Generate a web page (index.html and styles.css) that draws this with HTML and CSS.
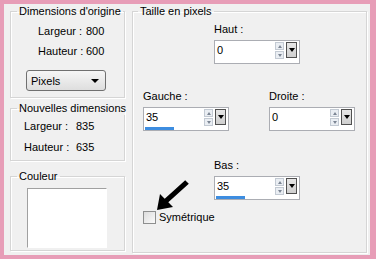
FILE: index.html
```html
<!DOCTYPE html>
<html lang="fr">
<head>
    <meta charset="UTF-8">
    <title>Taille de la bordure</title>
    <link rel="stylesheet" href="styles.css">
</head>
<body>
    <div class="panel">
        <div class="left">
            <fieldset class="group group-orig">
                <legend>Dimensions d'origine</legend>
                <div class="dims dims-orig">
                    <span>Largeur :</span><span>800</span>
                    <span>Hauteur :</span><span>600</span>
                </div>
                <div class="select"><span>Pixels</span><span class="caret"></span></div>
            </fieldset>

            <fieldset class="group group-new">
                <legend>Nouvelles dimensions</legend>
                <div class="dims dims-new">
                    <span>Largeur :</span><span>835</span>
                    <span>Hauteur :</span><span>635</span>
                </div>
            </fieldset>

            <fieldset class="group group-color">
                <legend>Couleur</legend>
                <div class="swatch"></div>
            </fieldset>
        </div>

        <fieldset class="group group-size">
            <legend>Taille en pixels</legend>

            <div class="field field-top">
                <label>Haut :</label>
                <div class="spin">
                    <div class="spin-row">
                        <span class="value">0</span>
                        <span class="arrows"><i class="up"></i><i class="down"></i></span>
                        <span class="drop"></span>
                    </div>
                    <div class="bar"><div class="bar-fill" style="width: 0px"></div></div>
                </div>
            </div>

            <div class="side-row">
                <div class="field">
                    <label>Gauche :</label>
                    <div class="spin">
                        <div class="spin-row">
                            <span class="value">35</span>
                            <span class="arrows"><i class="up"></i><i class="down"></i></span>
                            <span class="drop"></span>
                        </div>
                        <div class="bar"><div class="bar-fill" style="width: 29px"></div></div>
                    </div>
                </div>
                <div class="field">
                    <label>Droite :</label>
                    <div class="spin">
                        <div class="spin-row">
                            <span class="value">0</span>
                            <span class="arrows"><i class="up"></i><i class="down"></i></span>
                            <span class="drop"></span>
                        </div>
                        <div class="bar"><div class="bar-fill" style="width: 0px"></div></div>
                    </div>
                </div>
            </div>

            <div class="field field-bottom">
                <label>Bas :</label>
                <div class="spin">
                    <div class="spin-row">
                        <span class="value">35</span>
                        <span class="arrows"><i class="up"></i><i class="down"></i></span>
                        <span class="drop"></span>
                    </div>
                    <div class="bar"><div class="bar-fill" style="width: 29px"></div></div>
                </div>
            </div>

            <div class="check-row">
                <input type="checkbox" id="sym">
                <label for="sym">Symétrique</label>
            </div>
        </fieldset>

        <!-- pointer arrow drawn over the dialog -->
        <svg class="pointer" width="56" height="45" viewBox="0 0 56 45">
            <polygon points="17,35 20,19 24.7,23.7 45.2,5.2 48.8,8.8 28.3,27.3 33,32" fill="#000"/>
        </svg>
    </div>
</body>
</html>
```

FILE: styles.css
```css
html, body {
    margin: 0;
    height: 100%;
}

body {
    box-sizing: border-box;
    width: 376px;
    height: 259px;
    padding: 4px 6px 4px 4px;
    background-color: #e79db7;
    font-family: "Liberation Sans", Arial, sans-serif;
    font-size: 11px;
    color: #000;
}

.panel {
    display: flex;
    height: 251px;
    padding: 1px 3px 0 6px;
    box-sizing: border-box;
    background-color: #f0f0f0;
    position: relative;
}

.left {
    display: flex;
    flex-direction: column;
    width: 115px;
    margin-right: 7px;
}

.group {
    margin: 0;
    padding: 0;
    border: 1px solid #d5d5d5;
    box-shadow: inset 1px 1px 0 #fff, 1px 1px 0 #fff;
    min-width: 0;
}

.group legend {
    margin-left: 6px;
    padding: 0 2px;
    line-height: 13px;
    white-space: nowrap;
}

.group-orig {
    height: 93px;
    box-sizing: border-box;
}

.group-new {
    height: 59px;
    margin-top: 4px;
    box-sizing: border-box;
}

.group-color {
    height: 81px;
    margin-top: 9px;
    box-sizing: border-box;
}

.dims {
    display: grid;
    grid-template-columns: 48px auto;
}

.dims-orig {
    padding: 3px 0 0 27px;
    grid-auto-rows: 20px;
    line-height: 20px;
}

.dims-new {
    padding: 1px 0 0 13px;
    grid-template-columns: 52px auto;
    grid-auto-rows: 21px;
    line-height: 21px;
}

.select {
    display: flex;
    align-items: center;
    justify-content: space-between;
    width: 80px;
    height: 21px;
    box-sizing: border-box;
    margin: 9px 0 0 15px;
    padding: 0 6px 0 4px;
    border: 1px solid #707070;
    border-radius: 3px;
    background: linear-gradient(#f6f6f6, #dedede);
}

.caret {
    width: 0;
    height: 0;
    border-left: 4px solid transparent;
    border-right: 4px solid transparent;
    border-top: 4px solid #000;
}

.swatch {
    width: 80px;
    height: 60px;
    box-sizing: border-box;
    margin: 5px 0 0 16px;
    background: #fff;
    border-top: 1px solid #a0a0a0;
    border-left: 1px solid #a0a0a0;
    border-right: 1px solid #fff;
    border-bottom: 1px solid #fff;
}

.group-size {
    flex: 1;
    height: 248px;
    box-sizing: border-box;
    padding: 0 11px 0 10px;
}

.group-size legend {
    margin-left: -5px;
}

.field {
    display: flex;
    flex-direction: column;
    width: 86px;
}

.field label {
    line-height: 13px;
    margin-bottom: 4px;
}

.field-top {
    margin: 5px 0 0 71px;
}

.field-bottom {
    margin: 28px 0 0 71px;
}

.side-row {
    display: flex;
    justify-content: space-between;
    margin-top: 26px;
}

.spin {
    border: 1px solid #abadb3;
    background: #fff;
}

.spin-row {
    display: flex;
    align-items: flex-start;
    height: 19px;
    padding-top: 1px;
    box-sizing: border-box;
}

.value {
    flex: 1;
    padding-left: 2px;
    line-height: 16px;
}

.arrows {
    display: flex;
    flex-direction: column;
    width: 9px;
    margin-right: 2px;
}

.arrows i {
    display: flex;
    justify-content: center;
    align-items: center;
    height: 8px;
    margin-bottom: 1px;
    background: #eaeef3;
    border: 1px solid #c3cad3;
    box-sizing: border-box;
}

.arrows i::after {
    content: "";
    border-left: 2px solid transparent;
    border-right: 2px solid transparent;
}

.up::after {
    border-bottom: 3px solid #7b8593;
}

.down::after {
    border-top: 3px solid #7b8593;
}

.drop {
    display: flex;
    justify-content: center;
    align-items: center;
    width: 11px;
    height: 16px;
    box-sizing: border-box;
    margin-right: 2px;
    border: 1px solid #505050;
    background: linear-gradient(#e6e6e6, #cfcfcf);
}

.drop::after {
    content: "";
    border-left: 3px solid transparent;
    border-right: 3px solid transparent;
    border-top: 4px solid #000;
}

.bar {
    height: 3px;
    margin: 0 1px;
}

.bar-fill {
    height: 3px;
    background: #3d8de0;
}

.check-row {
    display: flex;
    align-items: center;
    margin-top: 11px;
    height: 13px;
}

.check-row input {
    appearance: none;
    width: 13px;
    height: 13px;
    margin: 0 3px 0 0;
    border: 1px solid #8e8f8f;
    background: linear-gradient(135deg, #dcdcdc, #fbfbfb);
    box-sizing: border-box;
}

.check-row label {
    line-height: 13px;
}

.pointer {
    position: absolute;
    left: 136px;
    top: 171px;
}
```
